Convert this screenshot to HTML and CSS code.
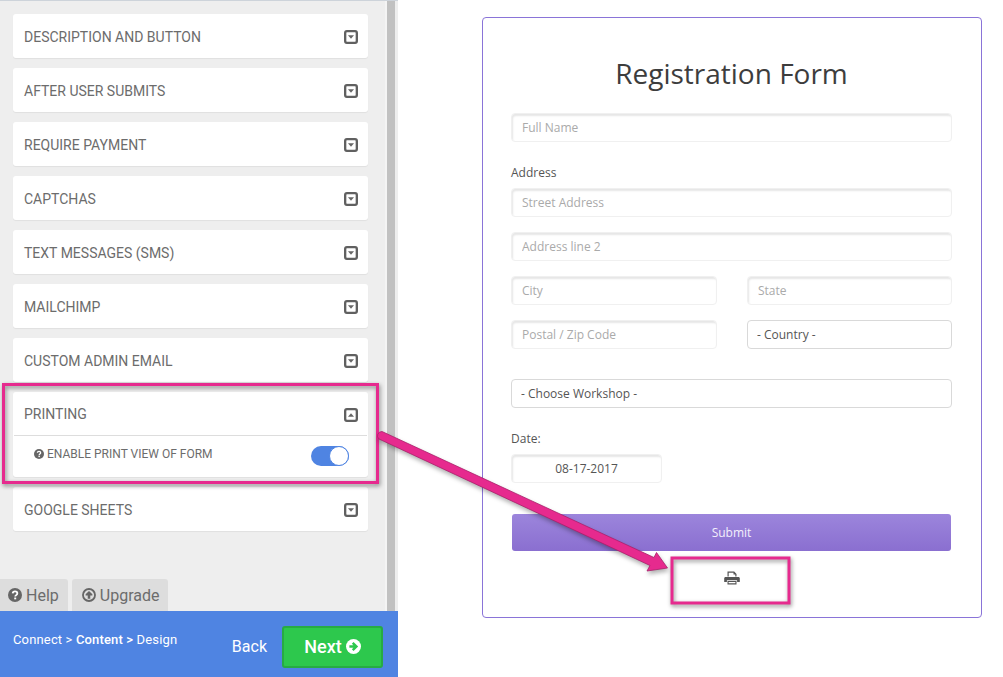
FILE: index.html
```html
<!DOCTYPE html>
<html lang="en">
<head>
  <meta charset="UTF-8" />
  <title>Form builder - Content</title>
  <link rel="stylesheet" href="styles.css">
</head>
<body>
  <div class="sidebar">
    <div class="panel">
      <div class="list">
        <div class="card"><div class="card-head"><span>DESCRIPTION AND BUTTON</span><svg class="caret" viewBox="0 0 12 12"><rect x="1" y="1" width="10" height="10" rx="1.5"/><path class="fill" d="M3.4 4.4h5.2L6 7.6z"/></svg></div></div>
        <div class="card"><div class="card-head"><span>AFTER USER SUBMITS</span><svg class="caret" viewBox="0 0 12 12"><rect x="1" y="1" width="10" height="10" rx="1.5"/><path class="fill" d="M3.4 4.4h5.2L6 7.6z"/></svg></div></div>
        <div class="card"><div class="card-head"><span>REQUIRE PAYMENT</span><svg class="caret" viewBox="0 0 12 12"><rect x="1" y="1" width="10" height="10" rx="1.5"/><path class="fill" d="M3.4 4.4h5.2L6 7.6z"/></svg></div></div>
        <div class="card"><div class="card-head"><span>CAPTCHAS</span><svg class="caret" viewBox="0 0 12 12"><rect x="1" y="1" width="10" height="10" rx="1.5"/><path class="fill" d="M3.4 4.4h5.2L6 7.6z"/></svg></div></div>
        <div class="card"><div class="card-head"><span>TEXT MESSAGES (SMS)</span><svg class="caret" viewBox="0 0 12 12"><rect x="1" y="1" width="10" height="10" rx="1.5"/><path class="fill" d="M3.4 4.4h5.2L6 7.6z"/></svg></div></div>
        <div class="card"><div class="card-head"><span>MAILCHIMP</span><svg class="caret" viewBox="0 0 12 12"><rect x="1" y="1" width="10" height="10" rx="1.5"/><path class="fill" d="M3.4 4.4h5.2L6 7.6z"/></svg></div></div>
        <div class="card"><div class="card-head"><span>CUSTOM ADMIN EMAIL</span><svg class="caret" viewBox="0 0 12 12"><rect x="1" y="1" width="10" height="10" rx="1.5"/><path class="fill" d="M3.4 4.4h5.2L6 7.6z"/></svg></div></div>
        <div class="card">
          <div class="card-head open"><span>PRINTING</span><svg class="caret" viewBox="0 0 12 12"><rect x="1" y="1" width="10" height="10" rx="1.5"/><path class="fill" d="M3.4 7.6h5.2L6 4.4z"/></svg></div>
          <div class="card-body">
            <span class="option">
              <svg class="ico-s" viewBox="0 0 20 20"><circle class="fill" cx="10" cy="10" r="10"/><path class="q" d="M6.7 7.6C6.9 5.800 8.300 4.900 10 4.900c1.900 0 3.300 1.100 3.300 2.800 0 2.500-3 2.400-3 4.600"/><rect class="dot" x="8.900" y="13.600" width="2.800" height="2.600"/></svg>
              ENABLE PRINT VIEW OF FORM
            </span>
            <span class="toggle"><span class="knob"></span></span>
          </div>
        </div>
        <div class="card"><div class="card-head"><span>GOOGLE SHEETS</span><svg class="caret" viewBox="0 0 12 12"><rect x="1" y="1" width="10" height="10" rx="1.5"/><path class="fill" d="M3.4 4.4h5.2L6 7.6z"/></svg></div></div>
        <div class="tabs">
          <a class="tab tab-help">
            <svg class="ico-m" viewBox="0 0 20 20"><circle class="fill" cx="10" cy="10" r="10"/><path class="q" d="M6.7 7.6C6.9 5.800 8.300 4.900 10 4.900c1.900 0 3.300 1.100 3.300 2.800 0 2.500-3 2.400-3 4.600"/><rect class="dot" x="8.900" y="13.600" width="2.800" height="2.600"/></svg>
            Help
          </a>
          <a class="tab">
            <svg class="ico-m" viewBox="0 0 20 20"><circle class="ring" cx="10" cy="10" r="8.600"/><path class="fill" d="M10 4.200l4.800 4.900v1.600h-3v4.600H8.200v-4.600h-3V9.100z"/></svg>
            Upgrade
          </a>
        </div>
      </div>
      <div class="scroll"></div>
    </div>
    <div class="footer">
      <div class="crumbs">Connect &gt; <b>Content &gt;</b> Design</div>
      <a class="back">Back</a>
      <a class="next">Next
        <svg class="ico-n" viewBox="0 0 20 20"><circle cx="10" cy="10" r="10" fill="#fff"/><path d="M4.500 8.300h5.400L7.800 6.200l2.300-2.300L16.200 10l-6.100 6.100-2.300-2.300 2.100-2.100H4.500z" fill="#2dc84d"/></svg>
      </a>
    </div>
  </div>

  <div class="preview">
    <form class="reg-form">
      <h1>Registration Form</h1>
      <input class="field" type="text" placeholder="Full Name" />
      <label class="lbl lbl-address">Address</label>
      <input class="field" type="text" placeholder="Street Address" />
      <input class="field" type="text" placeholder="Address line 2" />
      <div class="two">
        <input class="field" type="text" placeholder="City" />
        <input class="field" type="text" placeholder="State" />
      </div>
      <div class="two">
        <input class="field" type="text" placeholder="Postal / Zip Code" />
        <select class="field sel"><option>- Country -</option></select>
      </div>
      <select class="field sel workshop"><option>- Choose Workshop -</option></select>
      <label class="lbl lbl-date">Date:</label>
      <input class="field date" type="text" value="08-17-2017" />
      <button class="submit" type="button">Submit</button>
      <div class="print-row">
        <svg class="ico-print" viewBox="0 0 16 14"><path d="M3.500 5.500V.6h6.700l2.300 2.300v2.600h-1.200V3.600H9.500V1.800H4.700v3.700z"/><path d="M1.600 5.900h12.800c.8 0 1.400.6 1.400 1.400v3.600h-2.700V9.200H2.900v1.700H.2V7.300c0-.8.6-1.400 1.400-1.400z"/><path d="M3.500 9.900h9v3.500h-9zM4.600 10.900v1.400h6.800v-1.400z" fill-rule="evenodd"/></svg>
      </div>
    </form>
  </div>

  <svg class="marks" width="1003" height="677" viewBox="0 0 1003 677">
    <rect class="mark" x="3.500" y="384.500" width="374" height="98"/>
    <rect class="mark" x="672" y="558" width="117" height="45"/>
    <path class="arrow" d="M382 431.500 L654 557.500 L656.500 552.500 L667.500 568 L647 571 L650 565.500 L379 439 A4.300 4.300 0 0 1 382 431.500 Z"/>
  </svg>
</body>
</html>
```

FILE: styles.css
```css
html, body {
  margin: 0;
  height: 100%;
  background: white;
}
body {
  display: flex;
  width: 1003px;
  height: 677px;
  overflow: hidden;
  position: relative;
}
.sidebar {
  width: 398px;
  height: 677px;
  flex: none;
  display: flex;
  flex-direction: column;
  font-family: Roboto, sans-serif;
  color: #6c6c6c;
}
.panel {
  flex: 1;
  display: flex;
  min-height: 0;
  background: #eee;
  border-top: 1px solid #cdd3da;
}
.list {
  width: 387px;
  box-sizing: border-box;
  padding: 13px 19px 0 13px;
  display: flex;
  flex-direction: column;
  gap: 10px;
  position: relative;
  background: linear-gradient(to left, #f4f4f4 2px, #eee 2px);
}
.scroll {
  width: 8px;
  background: #c1c1c1;
}
.card {
  background: white;
  border-radius: 3px;
  box-shadow: 0 1px 1px rgba(0, 0, 0, 0.06);
}
.card-head {
  height: 44px;
  display: flex;
  align-items: center;
  justify-content: space-between;
  padding: 0 11px;
  font-size: 14px;
}
.card-head span {
  margin-top: 1px;
}
.card-head.open {
  height: 43px;
}
.caret {
  width: 14px;
  height: 14px;
  margin-top: 2px;
  margin-right: -1px;
}
.caret rect {
  fill: none;
  stroke: #606060;
  stroke-width: 2;
}
.fill {
  fill: #666;
}
.card-body {
  height: 42px;
  margin: 0 1px;
  border-top: 1px solid #ddd;
  display: flex;
  align-items: center;
  justify-content: space-between;
  padding: 0 18px 0 20px;
  box-sizing: border-box;
}
.option {
  display: flex;
  align-items: center;
  gap: 3px;
  font-size: 12px;
  margin-top: -5px;
}
.ico-s {
  width: 10px;
  height: 10px;
}
.q {
  fill: none;
  stroke: white;
  stroke-width: 2.600;
}
.dot {
  fill: white;
}
.toggle {
  width: 38px;
  height: 20px;
  margin-top: -1px;
  border-radius: 10px;
  background: #4f84e2;
  display: flex;
  justify-content: flex-end;
}
.knob {
  width: 18px;
  height: 18px;
  box-sizing: content-box;
  border: 1px solid #4f84e2;
  border-radius: 50%;
  background: white;
}
.tabs {
  position: absolute;
  bottom: 0;
  left: 0;
  display: flex;
  gap: 4px;
}
.tab {
  height: 32px;
  padding: 0 9px 0 10px;
  display: flex;
  align-items: center;
  gap: 4px;
  background: #ddd;
  border-radius: 3px 3px 0 0;
  font-size: 16px;
}
.tab-help {
  padding-left: 8px;
  border-top-left-radius: 0;
}
.ico-m {
  width: 14px;
  height: 14px;
}
.ring {
  fill: none;
  stroke: #666;
  stroke-width: 2.600;
}
.footer {
  height: 66px;
  flex: none;
  background: #4f84e2;
  color: white;
  display: flex;
  align-items: center;
  padding: 0 15px 0 13px;
}
.crumbs {
  font-size: 13px;
  letter-spacing: 0.15px;
  margin-top: -9px;
  flex: 1;
}
.crumbs b {
  font-weight: 500;
}
.back {
  font-size: 16px;
  margin-right: 15px;
  margin-top: 4px;
}
.next {
  width: 101px;
  height: 42px;
  box-sizing: border-box;
  margin-top: 5px;
  display: flex;
  align-items: center;
  justify-content: center;
  gap: 4px;
  background: #2dc84d;
  border: 2px solid #27ab43;
  border-radius: 3px;
  font-size: 18px;
  font-weight: 500;
}
.ico-n {
  width: 15px;
  height: 15px;
}
.preview {
  flex: 1;
  padding: 17px 0 0 84px;
}
.reg-form {
  width: 500px;
  height: 601px;
  box-sizing: border-box;
  padding: 0 29px 0 28px;
  border: 1px solid #8a74d8;
  border-radius: 4px;
  font-family: "Open Sans", sans-serif;
  color: #555;
  display: flex;
  flex-direction: column;
}
.reg-form h1 {
  margin: 35px 0 20px;
  height: 40px;
  line-height: 40px;
  font-size: 28px;
  font-weight: 400;
  text-align: center;
  color: #3d3d3d;
}
.field {
  display: block;
  width: 100%;
  height: 29px;
  box-sizing: border-box;
  margin: 0 0 15px;
  padding: 0 10px;
  border: 1px solid #f0f0f0;
  border-radius: 4px;
  box-shadow: inset 1px 2px 2px rgba(0, 0, 0, 0.1);
  font-family: "Open Sans", sans-serif;
  font-size: 12px;
  color: #555;
  background: white;
  outline: none;
}
.field::placeholder {
  color: #aaa;
}
.sel {
  appearance: none;
  border-color: #d9d9d9;
  box-shadow: none;
  padding: 0 9px;
}
.two {
  display: flex;
  justify-content: space-between;
}
.two .field {
  width: 206px;
}
.two .field:last-child {
  width: 205px;
}
.workshop {
  margin-top: 15px;
}
.lbl {
  font-size: 12px;
  line-height: 16px;
  color: #555;
}
.lbl-address,
.lbl-date {
  margin: 8px 0 7px;
}
.date {
  width: 151px;
  text-align: center;
  margin-bottom: 31px;
}
.submit {
  width: 439px;
  height: 37px;
  margin: 0 1px;
  flex: none;
  border: none;
  border-radius: 3px;
  background: linear-gradient(#9c85dc, #8a6fd0);
  color: #f3effc;
  font-family: "Open Sans", sans-serif;
  font-size: 12px;
}
.print-row {
  display: flex;
  justify-content: center;
  padding-top: 20px;
}
.ico-print {
  width: 16px;
  height: 14px;
  fill: #555;
}
.marks {
  position: absolute;
  top: 0;
  left: 0;
  pointer-events: none;
}
.mark {
  fill: none;
  stroke: #e62a8e;
  stroke-width: 3;
  filter: drop-shadow(1px 2px 2px rgba(0, 0, 0, 0.45));
}
.arrow {
  fill: #e62a8e;
  stroke: #a81f6a;
  stroke-width: 0.800;
  filter: drop-shadow(1px 3px 2px rgba(0, 0, 0, 0.3));
}
```
